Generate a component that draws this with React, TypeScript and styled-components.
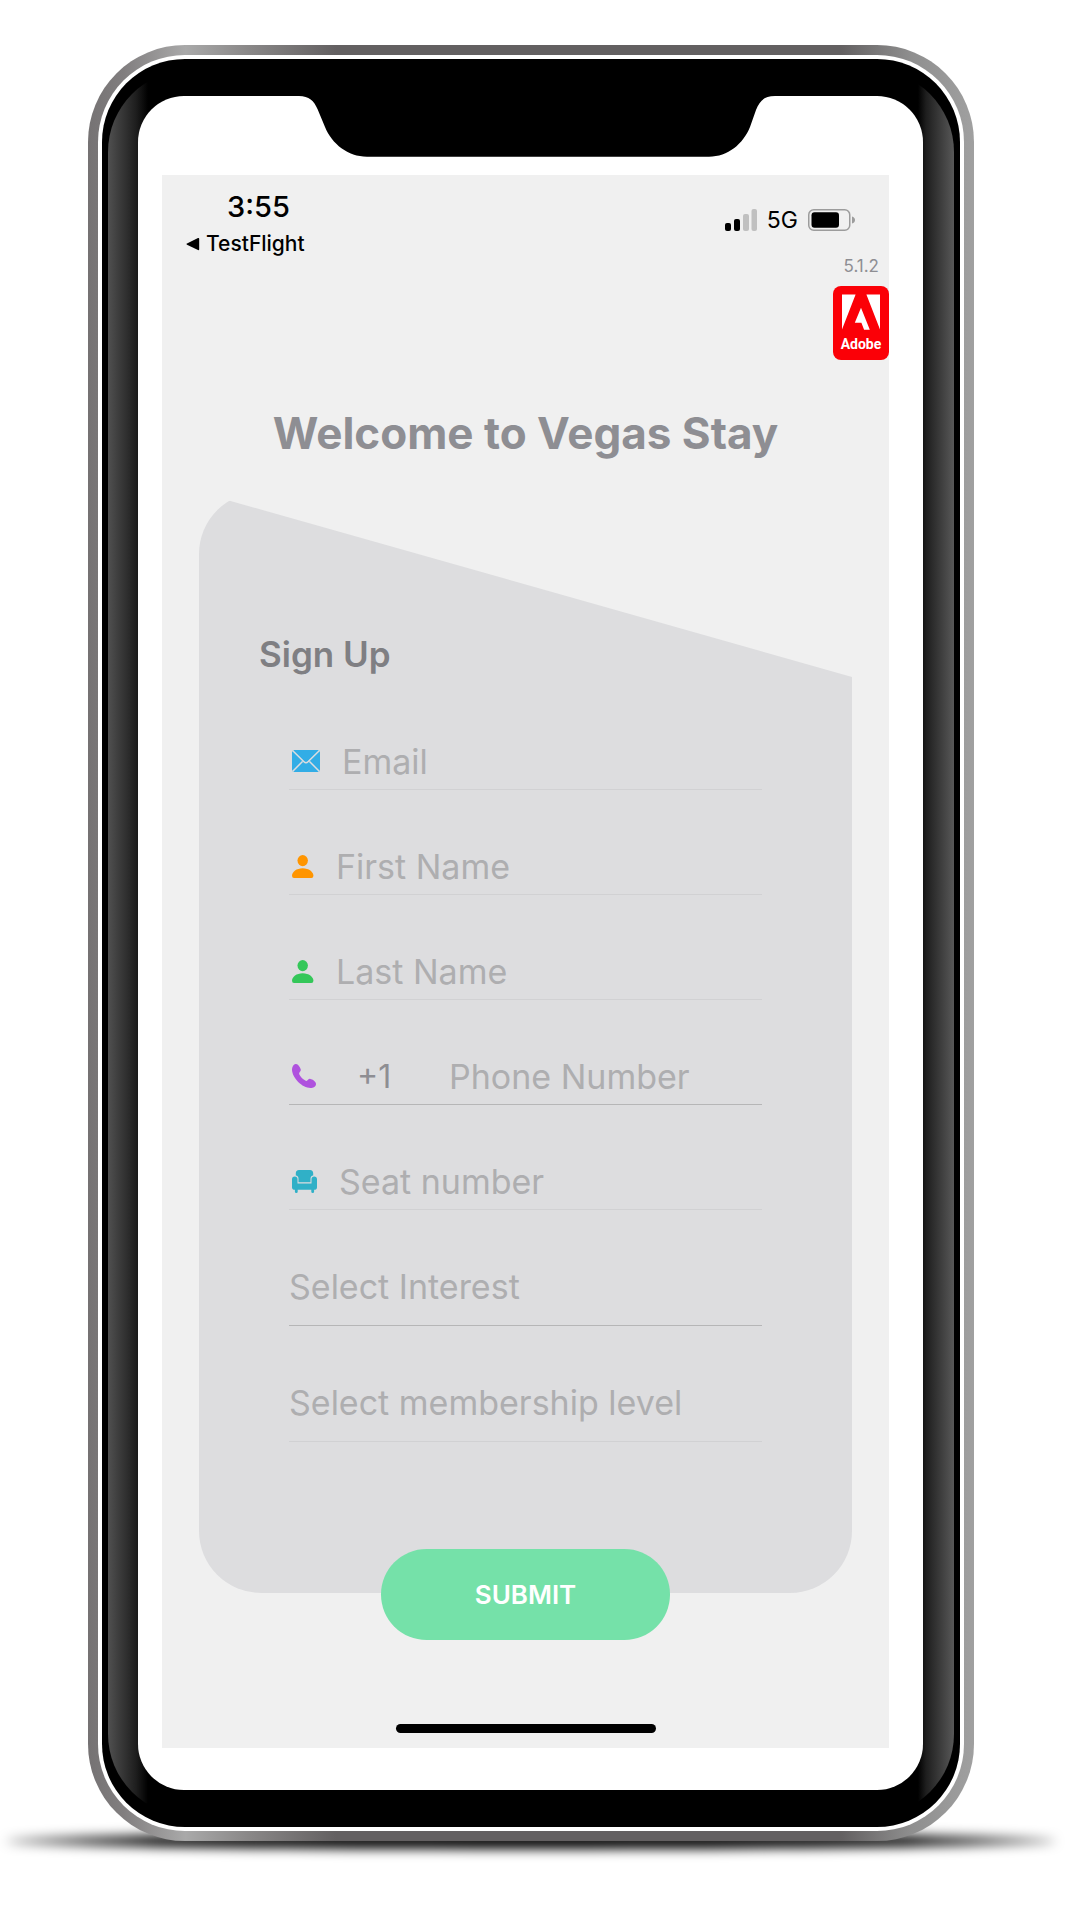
import React from "react";
import styled, { createGlobalStyle } from "styled-components";

const GlobalStyle = createGlobalStyle`
  *, *::before, *::after { box-sizing: border-box; }
  body {
    margin: 0;
    background: #fff;
    font-family: Inter, Roboto, "Liberation Sans", sans-serif;
  }
`;

const Page = styled.main`
  padding: 45px 103px 80px 88px;
`;

/* Phone body */

const Phone = styled.div`
  position: relative;
  isolation: isolate;

  &::before {
    content: "";
    position: absolute;
    z-index: -1;
    left: -82px;
    right: -82px;
    bottom: -8px;
    height: 16px;
    border-radius: 50%;
    background: linear-gradient(to right, rgba(0, 0, 0, 0.5), #000 14%, #000 86%, rgba(0, 0, 0, 0.5));
    filter: blur(6px);
  }
`;

const Frame = styled.div`
  padding: 10px;
  border-radius: 97px;
  background: linear-gradient(
    to right,
    #757273 0%,
    #817e7f 4%,
    #a9a9a9 11%,
    #8a8888 18%,
    #636061 28%,
    #636061 85%,
    #8f8f8f 93%,
    #a0a0a0 100%
  );
`;

const Ring = styled.div`
  padding: 4px;
  border-radius: 87px;
  background: #fff;
`;

const Bezel = styled.div`
  position: relative;
  padding: 37px 37px 37px 36px;
  border-radius: 83px;
  background: #000;

  &::before {
    content: "";
    position: absolute;
    inset: 11px 6px;
    border-radius: 82px;
    background:
      linear-gradient(to right, #505050, #1e1e1e 28px, #000 40px, transparent 41px),
      linear-gradient(to left, #585858, #1e1e1e 28px, #000 36px);
  }
`;

const Display = styled.div`
  position: relative;
  padding: 79px 34px 42px 24px;
  border-radius: 46px;
  background: #fff;
`;

const Notch = styled.svg`
  position: absolute;
  top: -1px;
  left: 161px;
  width: 476px;
  height: 62px;
`;

const Screen = styled.div`
  display: flex;
  flex-direction: column;
  padding: 14px 0 15px;
  background: #f0f0f0;
`;

/* Status bar */

const StatusBar = styled.header`
  display: flex;
  justify-content: space-between;
  padding: 0 34px 0 24px;
`;

const StatusLeft = styled.div`
  display: flex;
  flex-direction: column;
  gap: 7px;
`;

const Clock = styled.time`
  padding-left: 41px;
  font-size: 29px;
  font-weight: 500;
  line-height: 36px;
`;

const BackLink = styled.a`
  display: flex;
  align-items: center;
  gap: 6px;
  color: #000;
  font-size: 21px;
  font-weight: 500;
  line-height: 24px;
  text-decoration: none;
`;

const StatusRight = styled.div`
  display: flex;
  align-items: center;
  gap: 10px;
  height: 24px;
  margin-top: 19px;
  font-size: 23px;
  font-weight: 400;
  line-height: 24px;
`;

const Brand = styled.div`
  display: flex;
  flex-direction: column;
  align-items: flex-end;
  gap: 10px;
`;

const Version = styled.span`
  padding-right: 10px;
  color: #8e8e93;
  font-size: 17px;
  line-height: 20px;
`;

const Title = styled.h1`
  margin: 45px 0 31px;
  color: #8e8e93;
  font-size: 44px;
  font-weight: 700;
  line-height: 56px;
  text-align: center;
`;

/* Sign-up form */

const Form = styled.form`
  display: flex;
  flex-direction: column;
  align-items: center;
`;

const Card = styled.section`
  align-self: stretch;
  margin: 0 37px;
  padding: 142px 90px 151px 90px;
  border-radius: 62px;
  background: #dddddf;
  clip-path: polygon(0 0, 100% 185px, 100% 100%, 0 100%);
`;

const CardTitle = styled.h2`
  margin: 0 0 61px -30px;
  color: #7f7f83;
  font-size: 35px;
  font-weight: 600;
  line-height: 40px;
`;

const Fields = styled.div`
  display: flex;
  flex-direction: column;
  gap: 50px;
`;

const Row = styled.label<{ $strong?: boolean; $select?: boolean }>`
  display: flex;
  align-items: center;
  gap: 22px;
  padding: ${(p) => (p.$select ? "0 0 13px" : "0 0 2px 3px")};
  border-bottom: 1px solid ${(p) => (p.$strong ? "#b6b6b7" : "#d1d1d3")};
`;

const Input = styled.input`
  flex: 1;
  min-width: 0;
  height: 52px;
  padding: 0;
  border: 0;
  outline: 0;
  background: transparent;
  color: #8e8e93;
  font-family: inherit;
  font-size: 34px;

  &::placeholder {
    color: #aeaeb0;
    opacity: 1;
  }
`;

const CodeInput = styled(Input)`
  flex: 0 0 70px;
  margin-left: 19px;
  font-size: 32px;
`;

const Select = styled.select`
  flex: 1;
  min-width: 0;
  height: 52px;
  padding: 0;
  border: 0;
  outline: 0;
  appearance: none;
  background: transparent;
  color: #aeaeb0;
  font-family: inherit;
  font-size: 34px;
`;

const Submit = styled.button`
  position: relative;
  width: 289px;
  height: 91px;
  margin-top: -44px;
  border: 0;
  border-radius: 46px;
  background: #75e1a9;
  color: #fff;
  font-family: inherit;
  font-size: 26px;
  font-weight: 600;
`;

const HomeBar = styled.div`
  align-self: center;
  width: 260px;
  height: 9px;
  margin-top: 84px;
  border-radius: 5px;
  background: #000;
`;

/* Icons */

const BackIcon = () => (
  <svg width="14" height="14" viewBox="0 0 14 14" aria-hidden="true">
    <path d="M1 6.4 12 1.1q1.2-.5 1.2.8v10.400q0 1.300-1.200.8L1 7.800q-1.100-.7 0-1.400Z" />
  </svg>
);

const SignalIcon = () => (
  <svg width="32" height="22" viewBox="0 0 32 22" aria-hidden="true">
    <rect x="0" y="14" width="6" height="8" rx="2" />
    <rect x="9" y="10" width="6" height="12" rx="2" />
    <rect x="18" y="5" width="6" height="17" rx="2" fill="#c0c0c0" />
    <rect x="26.500" y="0" width="5.500" height="22" rx="2" fill="#c0c0c0" />
  </svg>
);

const BatteryIcon = () => (
  <svg width="47" height="22" viewBox="0 0 47 22" aria-hidden="true">
    <rect x=".75" y=".75" width="41" height="20.500" rx="5" fill="none" stroke="#9c9c9c" strokeWidth="1.500" />
    <rect x="3.500" y="3.300" width="27.500" height="15.400" rx="3" />
    <path d="M44 7.500q3 1 3 3.500t-3 3.500Z" fill="#9c9c9c" />
  </svg>
);

const AdobeLogo = () => (
  <svg width="56" height="74" viewBox="0 0 56 74" role="img" aria-label="Adobe">
    <rect width="56" height="74" rx="8" fill="#fb0007" />
    <path d="M9 8.500h13.600L9 43.500ZM33.400 8.500H47v35ZM28 21.800l8.800 21.900h-5.700l-2.700-7h-6.600Z" fill="#fff" />
    <text
      x="28"
      y="63"
      fill="#fff"
      textAnchor="middle"
      fontFamily="Roboto, 'Open Sans', sans-serif"
      fontSize="14"
      fontWeight="700"
    >
      Adobe
    </text>
  </svg>
);

const MailIcon = () => (
  <svg width="28" height="22" viewBox="0 0 28 22" aria-hidden="true">
    <rect width="28" height="22" rx="2.500" fill="#32ade6" />
    <path
      d="M.5.500 12 11.800q2 1.900 4 0L27.500.500M.5 21.500l10-10M27.500 21.500l-10-10"
      fill="none"
      stroke="#dddddf"
      strokeWidth="1.500"
    />
  </svg>
);

const PersonIcon = ({ color }: { color: string }) => (
  <svg width="22" height="23" viewBox="0 0 22 23" fill={color} aria-hidden="true">
    <ellipse cx="10.700" cy="5.600" rx="5.200" ry="5.600" />
    <path d="M0 20.800C0 17 4.500 13.300 10.700 13.300S21.400 17 21.400 20.800q0 2.200-2 2.200H2Q0 23 0 20.800Z" />
  </svg>
);

const PhoneIcon = () => (
  <svg width="24" height="24" viewBox="0 0 24 24" aria-hidden="true">
    <path
      d="M0 5.300C.1 2.700 1.600.3 3.600 0 6-.2 7.600 2.600 8.600 5c.9 2.300-1.600 3-1.500 4.600.2 2.300 4.800 7 7.200 7.300 1.500.1 2-2.300 4-2 2.300.3 5.700 2.600 5.700 5 0 2.500-2.800 4.100-5.500 4.100C10 24-.2 13.500 0 5.300Z"
      fill="#af52de"
    />
  </svg>
);

const SeatIcon = () => (
  <svg width="25" height="23" viewBox="0 0 25 23" fill="#30b0c7" aria-hidden="true">
    <path d="M3.800 5.500V3.300Q3.800.2 7 0h11q3.200.2 3.200 3.300v2.200q-2.700.4-2.700 3.200v3.600H6.500V8.700q0-2.800-2.700-3.200Z" />
    <path d="M2.800 6.600q2.700 0 2.700 2.700v4.100h14V9.300q0-2.700 2.700-2.700T25 9.300v8.300q0 2-1.700 2.200h-1.200v1.900q0 1.300-1.400 1.300t-1.400-1.300v-1.900H5.700v1.900Q5.700 23 4.300 23t-1.400-1.300v-1.900H1.700Q0 19.600 0 17.600V9.300q0-2.700 2.800-2.700Z" />
  </svg>
);

export default function App() {
  return (
    <>
      <GlobalStyle />
      <Page>
        <Phone>
          <Frame>
            <Ring>
              <Bezel>
                <Display>
                  <Notch viewBox="0 0 476 62" aria-hidden="true">
                    <path d="M0 0v1C10 1 15 6 18.500 14L26 32C33 49 49 61.700 68 61.700H410C429 61.700 444 49 451 32L457 15C461 5 466 1 476 1V0Z" />
                  </Notch>
                  <Screen>
                    <StatusBar>
                      <StatusLeft>
                        <Clock>3:55</Clock>
                        <BackLink href="#testflight">
                          <BackIcon />
                          TestFlight
                        </BackLink>
                      </StatusLeft>
                      <StatusRight>
                        <SignalIcon />
                        <span>5G</span>
                        <BatteryIcon />
                      </StatusRight>
                    </StatusBar>
                    <Brand>
                      <Version>5.1.2</Version>
                      <AdobeLogo />
                    </Brand>
                    <Title>Welcome to Vegas Stay</Title>
                    <Form onSubmit={(e) => e.preventDefault()}>
                      <Card>
                        <CardTitle>Sign Up</CardTitle>
                        <Fields>
                          <Row>
                            <MailIcon />
                            <Input type="email" aria-label="Email" placeholder="Email" />
                          </Row>
                          <Row>
                            <PersonIcon color="#ff9500" />
                            <Input type="text" aria-label="First Name" placeholder="First Name" />
                          </Row>
                          <Row>
                            <PersonIcon color="#34c759" />
                            <Input type="text" aria-label="Last Name" placeholder="Last Name" />
                          </Row>
                          <Row as="div" $strong>
                            <PhoneIcon />
                            <CodeInput type="text" aria-label="Country code" defaultValue="+1" />
                            <Input type="tel" aria-label="Phone Number" placeholder="Phone Number" />
                          </Row>
                          <Row>
                            <SeatIcon />
                            <Input type="text" aria-label="Seat number" placeholder="Seat number" />
                          </Row>
                          <Row $select $strong>
                            <Select aria-label="Select Interest" defaultValue="">
                              <option value="">Select Interest</option>
                            </Select>
                          </Row>
                          <Row $select>
                            <Select aria-label="Select membership level" defaultValue="">
                              <option value="">Select membership level</option>
                            </Select>
                          </Row>
                        </Fields>
                      </Card>
                      <Submit type="submit">SUBMIT</Submit>
                    </Form>
                    <HomeBar />
                  </Screen>
                </Display>
              </Bezel>
            </Ring>
          </Frame>
        </Phone>
      </Page>
    </>
  );
}
